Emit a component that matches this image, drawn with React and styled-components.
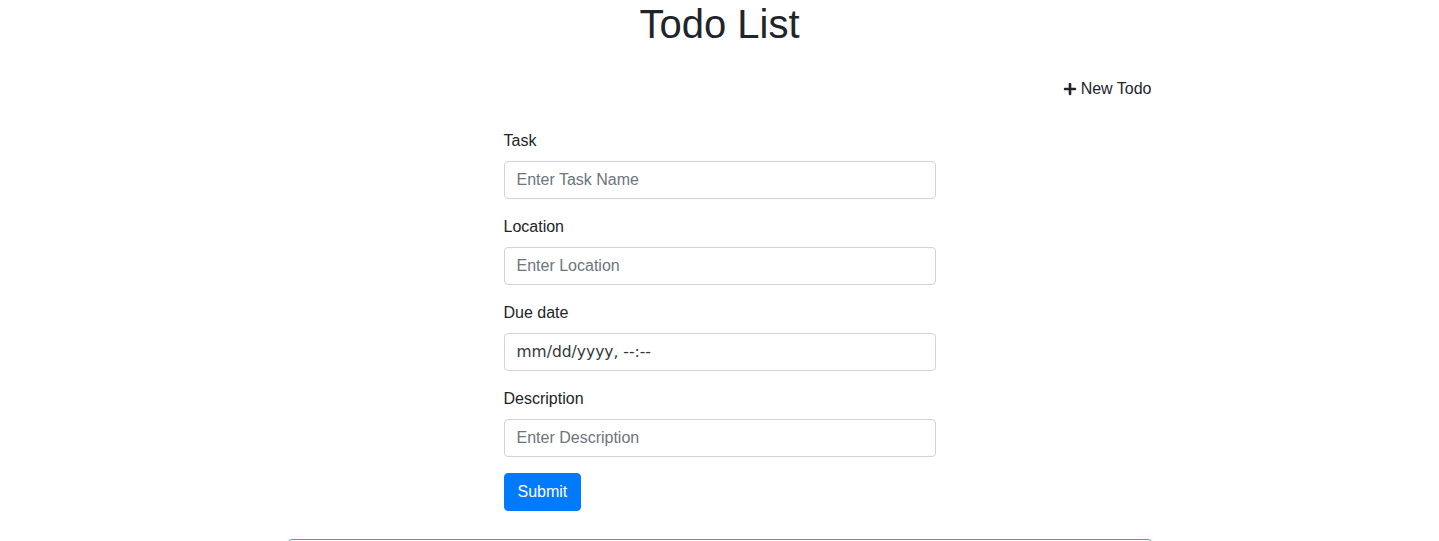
import React from "react";
import styled, { createGlobalStyle } from "styled-components";
import { FaPlus } from "react-icons/fa";

const GlobalStyle = createGlobalStyle`
  body {
    margin: 0;
    background: #fff;
    color: #212529;
    font-family: "Liberation Sans", Arial, sans-serif;
    font-size: 16px;
    line-height: 1.5;
  }
`;

const Page = styled.div`
  width: 864px;
  margin: 0 auto;
`;

const Title = styled.h1`
  margin: 0 0 8px;
  text-align: center;
  font-size: 40px;
  font-weight: 400;
  line-height: 1.2;
`;

const Toolbar = styled.div`
  display: flex;
  justify-content: flex-end;
  padding-top: 21px;
`;

const NewButton = styled.button`
  display: flex;
  align-items: center;
  gap: 4px;
  padding: 0;
  border: none;
  background: none;
  color: #212529;
  font: inherit;
  line-height: 24px;
  cursor: pointer;
`;

const Form = styled.form`
  width: 50%;
  margin: 28px auto 0;
`;

const Group = styled.div`
  margin-bottom: 16px;
`;

const Label = styled.label`
  display: block;
  margin-bottom: 8px;
`;

const Input = styled.input`
  display: block;
  box-sizing: border-box;
  width: 100%;
  height: 38px;
  padding: 6px 12px;
  border: 1px solid #ced4da;
  border-radius: 4px;
  font-family: ${(p) =>
    p.$date ? '"DejaVu Sans", sans-serif' : '"Liberation Sans", Arial, sans-serif'};
  font-size: ${(p) => (p.$date ? "15.5px" : "16px")};
  color: #495057;
  &::placeholder {
    color: ${(p) => (p.$date ? "#33383d" : "#6c757d")};
    opacity: 1;
  }
`;

const Submit = styled.button`
  padding: 6px 13px;
  border: 1px solid #007bff;
  border-radius: 4px;
  background: #007bff;
  color: #fff;
  font-family: inherit;
  font-size: 16px;
  line-height: 24px;
  cursor: pointer;
`;

const ListBox = styled.div`
  margin-top: 28px;
  height: 120px;
  border: 1px solid #3aa6c4;
  border-radius: 4px;
`;

const fields = [
  { label: "Task", placeholder: "Enter Task Name" },
  { label: "Location", placeholder: "Enter Location" },
  { label: "Due date", placeholder: "mm/dd/yyyy, --:--", date: true },
  { label: "Description", placeholder: "Enter Description" },
];

export default function App() {
  return (
    <>
      <GlobalStyle />
      <Page>
        <Title>Todo List</Title>
        <Toolbar>
          <NewButton type="button">
            <FaPlus size={14} />
            New Todo
          </NewButton>
        </Toolbar>
        <Form onSubmit={(e) => e.preventDefault()}>
          {fields.map((f) => (
            <Group key={f.label}>
              <Label>{f.label}</Label>
              <Input placeholder={f.placeholder} $date={f.date} />
            </Group>
          ))}
          <Submit type="submit">Submit</Submit>
        </Form>
        <ListBox />
      </Page>
    </>
  );
}
